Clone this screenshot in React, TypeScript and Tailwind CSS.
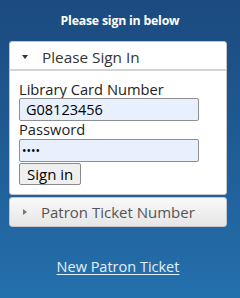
import React from 'react'

export default function App() {
  return (
    <div className="w-[240px] h-[298px] bg-gradient-to-b from-[#1b4a7f] to-[#2470ad] font-['Open_Sans',sans-serif] flex flex-col items-center">
      <h1 className="mt-[12px] text-[12.3px] font-bold text-white leading-[18px] tracking-[-0.2px]">Please sign in below</h1>

      {/* Sign in panel */}
      <div className="mt-[11px] w-[218px] ml-[-4px] bg-white rounded-[3px] border border-[#c5c5c5]">
        <div className="h-[29px] pt-[3px] flex items-center border-b-2 border-[#d4d4d4]">
          <span className="ml-[12px] w-0 h-0 border-l-[3.5px] border-r-[3.5px] border-t-[4px] border-l-transparent border-r-transparent border-t-[#333]"></span>
          <span className="ml-[14px] text-[15.3px] text-[#333] leading-[20px]">Please Sign In</span>
        </div>
        <div className="px-[9px] pt-[10px] pb-[9px] flex flex-col items-start text-[14.7px] text-[#222] leading-[17px]">
          <label>Library Card Number</label>
          <input
            className="w-[180px] h-[23px] px-[6px] bg-[#e8f0fe] border border-[#8f8f8f] rounded-[2px] text-[14.5px] text-black outline-none"
            defaultValue="G08123456"
          />
          <label>Password</label>
          <input
            type="password"
            className="mt-[1px] w-[180px] h-[23px] px-[2px] bg-[#e8f0fe] border border-[#8f8f8f] rounded-[2px] text-[12px] text-black outline-none"
            defaultValue="abcd"
          />
          <button className="mt-[1px] h-[22px] px-[7px] bg-[#efefef] border border-[#8a8a8a] rounded-[2px] text-[15px] text-black leading-[18px]">Sign in</button>
        </div>
      </div>

      {/* Collapsed panel */}
      <div className="mt-[2px] w-[218px] ml-[-4px] h-[30px] flex items-center bg-gradient-to-b from-[#f9f9f9] to-[#e6e6e6] rounded-[3px] border border-[#c5c5c5]">
        <span className="ml-[13px] w-0 h-0 border-t-[3.5px] border-b-[3.5px] border-l-[4px] border-t-transparent border-b-transparent border-l-[#777]"></span>
        <span className="ml-[14px] text-[15px] text-[#555] leading-[20px]">Patron Ticket Number</span>
      </div>

      <a href="#" className="mt-[30px] ml-[-4px] text-[14.5px] text-[#e6f0fa] underline underline-offset-[2px] leading-[20px]">New Patron Ticket</a>
    </div>
  )
}
